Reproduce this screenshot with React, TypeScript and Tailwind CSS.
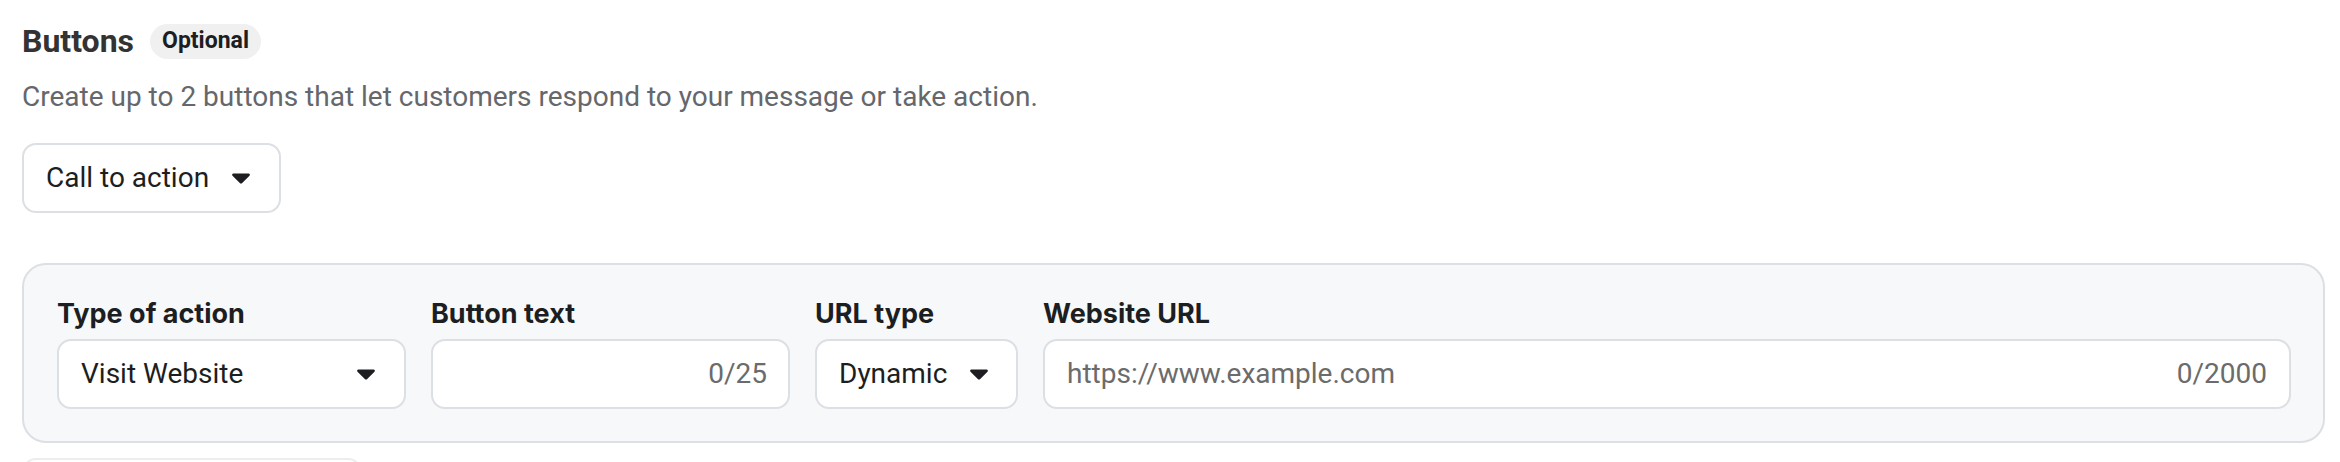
import React from "react";

const roboto = "font-['Roboto',sans-serif]";
const inter = "font-['Inter',sans-serif]";

function Caret() {
  return (
    <svg width="18" height="11" viewBox="0 0 18 11" className="shrink-0">
      <path d="M1.5 0.5h15c1.2 0 1.8 1.3 1 2.2L10.2 10c-0.6 0.7-1.8 0.7-2.4 0L0.5 2.7c-0.8-0.9-0.2-2.2 1-2.2z" fill="#1c1e21" />
    </svg>
  );
}

function Field({ label, className, children }: { label: string; className: string; children: React.ReactNode }) {
  return (
    <div className={`flex flex-col gap-[8px] ${className}`}>
      <div className={`${inter} text-[27px] leading-[34px] font-bold text-[#1c1e21] whitespace-nowrap`}>{label}</div>
      <div className="h-[70px] bg-white border-2 border-[#dcdfe3] rounded-[14px] flex items-center">
        {children}
      </div>
    </div>
  );
}

export default function App() {
  return (
    <div className={`w-[2340px] h-[462px] overflow-hidden bg-white pl-[22px] pr-[15px] pt-[21px] ${roboto}`}>
      <div className="flex items-center gap-[16px] h-[40px]">
        <span className="text-[32px] leading-[40px] font-bold text-[#333333]">Buttons</span>
        <span className="h-[35px] px-[12px] rounded-full bg-[#f0f0f0] text-[23px] font-bold text-[#1c1e21] flex items-center">
          Optional
        </span>
      </div>
      <p className="mt-[18px] text-[28px] leading-[36px] text-[#65676b]">
        Create up to 2 buttons that let customers respond to your message or take action.
      </p>
      <button className="mt-[28px] h-[70px] w-[259px] border-2 border-[#dcdfe3] rounded-[14px] bg-white flex items-center pl-[22px] pr-[29px] gap-[23px] text-[28px] text-[#1c1e21] whitespace-nowrap">
        <span>Call to action</span>
        <Caret />
      </button>

      <div className="mt-[50px] bg-[#f7f8fa] border-2 border-[#dcdfe3] rounded-[24px] pl-[33px] pr-[32px] pt-[32px] pb-[32px] flex gap-[25px]">
        <Field label="Type of action" className="w-[349px]">
          <div className="flex items-center justify-between w-full pl-[22px] pr-[29px] text-[28px] text-[#1c1e21]">
            <span>Visit Website</span>
            <Caret />
          </div>
        </Field>
        <Field label="Button text" className="w-[359px]">
          <div className="flex items-center justify-end w-full pr-[21px] text-[28px] text-[#6b6b6b]">0/25</div>
        </Field>
        <Field label="URL type" className="w-[203px]">
          <div className="flex items-center justify-between w-full pl-[22px] pr-[28px] text-[28px] text-[#1c1e21]">
            <span>Dynamic</span>
            <Caret />
          </div>
        </Field>
        <Field label="Website URL" className="flex-1">
          <div className="flex items-center justify-between w-full pl-[22px] pr-[22px] text-[28px] text-[#6b6b6b]">
            <span>https://www.example.com</span>
            <span>0/2000</span>
          </div>
        </Field>
      </div>

      <div className="mt-[15px] w-[340px] h-[40px] border-2 border-[#ebedf0] rounded-[14px] bg-white" />
    </div>
  );
}
